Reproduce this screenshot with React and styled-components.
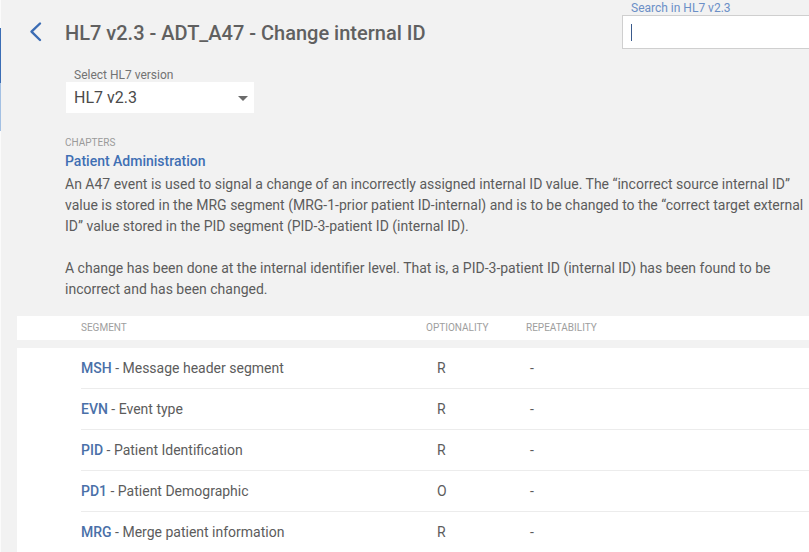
import React from "react";
import styled, { createGlobalStyle } from "styled-components";

const Global = createGlobalStyle`
  html, body { margin: 0; padding: 0; }
  body { font-family: Roboto, "Noto Sans", Arial, sans-serif; background: #f2f2f2; }
  * { box-sizing: border-box; }
`;

const Page = styled.div`
  display: flex;
  width: 809px;
  height: 552px;
  overflow: hidden;
  background: #f2f2f2;
`;

const SideStrip = styled.div`
  width: 1px;
  flex-shrink: 0;
  background: #fbfbfb;
  display: flex;
  flex-direction: column;
`;

const StripSegment = styled.div`
  height: ${(p) => p.$h}px;
  background: ${(p) => p.$c};
`;

const Main = styled.div`
  flex: 1;
  min-width: 0;
  display: flex;
  flex-direction: column;
  padding-left: 16px;
`;

const Header = styled.div`
  display: flex;
  align-items: flex-start;
  padding-left: 9px;
`;

const TitleRow = styled.div`
  display: flex;
  align-items: center;
  margin-top: 21px;
  gap: 19px;
`;

const BackIcon = styled.svg`
  width: 20px;
  height: 24px;
  flex-shrink: 0;
`;

const Title = styled.h1`
  margin: 0;
  font-size: 20px;
  line-height: 24px;
  font-weight: 500;
  color: #606060;
  white-space: nowrap;
`;

const SearchBlock = styled.div`
  margin-left: auto;
  margin-right: -20px;
  width: 207px;
  flex-shrink: 0;
  padding-top: 1px;
`;

const SearchLabel = styled.div`
  font-size: 12px;
  line-height: 14px;
  color: #6b8fc7;
  padding-left: 9px;
`;

const SearchInput = styled.div`
  height: 34px;
  background: #fff;
  border: 1px solid #cfcfcf;
  display: flex;
  align-items: center;
  padding-left: 8px;
`;

const Caret = styled.span`
  width: 1px;
  height: 17px;
  background: #3a5a8c;
`;

const Content = styled.div`
  padding-left: 48px;
  margin-top: 19px;
  display: flex;
  flex-direction: column;
  align-items: flex-start;
`;

const SelectLabel = styled.div`
  font-size: 12px;
  line-height: 14px;
  color: #737373;
  margin-left: 9px;
`;

const SelectBox = styled.div`
  margin-left: 1px;
  width: 188px;
  height: 31px;
  background: #fff;
  display: flex;
  align-items: center;
  justify-content: space-between;
  padding: 0 6px 0 8px;
  font-size: 16px;
  color: #4a4a4a;
`;

const Arrow = styled.span`
  width: 0;
  height: 0;
  border-left: 5px solid transparent;
  border-right: 5px solid transparent;
  border-top: 5px solid #6b6b6b;
  margin-top: 1px;
`;

const Overline = styled.div`
  margin-top: 23px;
  font-size: 10px;
  line-height: 14px;
  color: #9a9a9a;
  text-transform: uppercase;
`;

const ChapterLink = styled.div`
  margin-top: 1px;
  font-size: 14px;
  line-height: 20px;
  font-weight: 500;
  color: #3f6fb4;
`;

const Description = styled.p`
  margin: 3px 0 0;
  width: 748px;
  font-size: 14px;
  line-height: 21px;
  color: #5c5c5c;
`;

const Table = styled.div`
  margin-top: 16px;
  flex: 1;
  display: flex;
  flex-direction: column;
`;

const HeadRow = styled.div`
  height: 24px;
  background: #fff;
  display: grid;
  grid-template-columns: 409px 100px 1fr;
  align-items: center;
  padding-left: 64px;
  grid-template-columns: 345px 100px 1fr;
`;

const HeadCell = styled.div`
  font-size: 10px;
  line-height: 12px;
  color: #9e9e9e;
  text-transform: uppercase;
`;

const Body = styled.div`
  margin-top: 8px;
  flex: 1;
  background: #fff;
  padding-left: 64px;
`;

const Row = styled.div`
  height: 41px;
  display: grid;
  grid-template-columns: 345px 100px 1fr;
  align-items: center;
  border-bottom: 1px solid #ececec;
  font-size: 14px;
  color: #5c5c5c;
`;

const Code = styled.span`
  font-weight: 500;
  color: #4a70a8;
`;

const Cell = styled.div`
  padding-left: ${(p) => p.$pad || 0}px;
`;

const segments = [
  { code: "MSH", name: "Message header segment", opt: "R" },
  { code: "EVN", name: "Event type", opt: "R" },
  { code: "PID", name: "Patient Identification", opt: "R" },
  { code: "PD1", name: "Patient Demographic", opt: "O" },
  { code: "MRG", name: "Merge patient information", opt: "R" },
];

export default function App() {
  return (
    <>
      <Global />
      <Page>
        <SideStrip>
          <StripSegment $h={28} $c="#fbfbfb" />
          <StripSegment $h={55} $c="#3a6db5" />
          <StripSegment $h={48} $c="#a3c0e3" />
        </SideStrip>
        <Main>
          <Header>
            <TitleRow>
              <BackIcon viewBox="0 0 20 24">
                <polyline
                  points="14,2.5 5.5,10.7 14,19"
                  fill="none"
                  stroke="#3b6cb4"
                  strokeWidth="2.4"
                  strokeLinecap="round"
                  strokeLinejoin="round"
                />
              </BackIcon>
              <Title>HL7 v2.3 - ADT_A47 - Change internal ID</Title>
            </TitleRow>
            <SearchBlock>
              <SearchLabel>Search in HL7 v2.3</SearchLabel>
              <SearchInput>
                <Caret />
              </SearchInput>
            </SearchBlock>
          </Header>
          <Content>
            <SelectLabel>Select HL7 version</SelectLabel>
            <SelectBox>
              <span>HL7 v2.3</span>
              <Arrow />
            </SelectBox>
            <Overline>Chapters</Overline>
            <ChapterLink>Patient Administration</ChapterLink>
            <Description>
              An A47 event is used to signal a change of an incorrectly assigned internal ID value. The
              “incorrect source internal ID” value is stored in the MRG segment (MRG-1-prior patient
              ID-internal) and is to be changed to the “correct target external ID” value stored in the
              PID segment (PID-3-patient ID (internal ID).
              <br />
              <br />
              A change has been done at the internal identifier level. That is, a PID-3-patient ID
              (internal ID) has been found to be incorrect and has been changed.
            </Description>
          </Content>
          <Table>
            <HeadRow>
              <HeadCell>Segment</HeadCell>
              <HeadCell>Optionality</HeadCell>
              <HeadCell>Repeatability</HeadCell>
            </HeadRow>
            <Body>
              {segments.map((s) => (
                <Row key={s.code}>
                  <Cell>
                    <Code>{s.code}</Code> - {s.name}
                  </Cell>
                  <Cell $pad={11}>{s.opt}</Cell>
                  <Cell $pad={4}>-</Cell>
                </Row>
              ))}
            </Body>
          </Table>
        </Main>
      </Page>
    </>
  );
}
